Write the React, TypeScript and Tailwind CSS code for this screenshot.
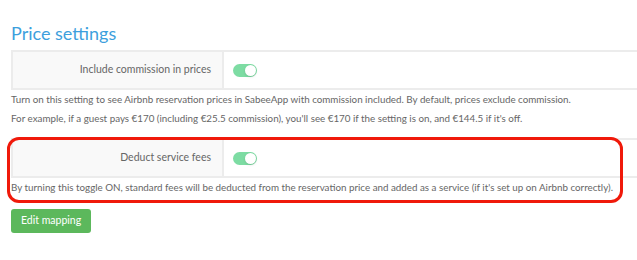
import { useState } from 'react'

function Toggle({ on, onChange }: { on: boolean; onChange: () => void }) {
  return (
    <button
      onClick={onChange}
      className={`relative w-[24px] h-[13px] rounded-full transition-colors ${on ? 'bg-[#7ddca3]' : 'bg-[#ddd]'}`}
    >
      <span
        className={`absolute top-[1px] w-[11px] h-[11px] rounded-full bg-white shadow-sm transition-all ${on ? 'left-[12px]' : 'left-[1px]'}`}
      />
    </button>
  )
}

function SettingRow({ label, on, onChange }: { label: string; on: boolean; onChange: () => void }) {
  return (
    <div className="flex h-[40px] border-2 border-[#ececec] mr-[-4px]">
      <div className="w-[211px] shrink-0 bg-[#f9f9f9] border-r-2 border-[#ececec] flex items-center justify-end pr-[11px] text-[10.5px] text-[#666]">
        {label}
      </div>
      <div className="flex-1 flex items-center pl-[9px]">
        <Toggle on={on} onChange={onChange} />
      </div>
    </div>
  )
}

export default function App() {
  const [commission, setCommission] = useState(true)
  const [fees, setFees] = useState(true)

  return (
    <div className="w-[637px] h-[260px] overflow-hidden bg-white pl-[11px] font-['Lato',sans-serif]">
      <h2 className="text-[18px] text-[#3d9fdd] pt-[21px] leading-[24px] mb-[5px]">Price settings</h2>

      <SettingRow label="Include commission in prices" on={commission} onChange={() => setCommission(!commission)} />
      <p className="text-[9.8px] text-[#666] leading-[18px]">
        Turn on this setting to see Airbnb reservation prices in SabeeApp with commission included. By default, prices exclude commission.
      </p>
      <p className="text-[9.8px] text-[#666] mt-[1px] leading-[18px]">
        For example, if a guest pays €170 (including €25.5 commission), you'll see €170 if the setting is on, and €144.5 if it's off.
      </p>

      {/* Highlighted setting */}
      <div className="relative mt-[11px]">
        <SettingRow label="Deduct service fees" on={fees} onChange={() => setFees(!fees)} />
        <p className="text-[9.8px] text-[#666] leading-[18px] whitespace-nowrap">
          By turning this toggle ON, standard fees will be deducted from the reservation price and added as a service (if it's set up on Airbnb correctly).
        </p>
        <div className="absolute left-[-4px] top-[-1px] w-[616px] h-[66px] border-[3px] border-[#f0190a] rounded-[12px] pointer-events-none" />
      </div>

      <button className="mt-[13px] h-[24px] px-[10px] rounded-[3px] bg-[#5cb85c] text-white text-[10.5px]">
        Edit mapping
      </button>
    </div>
  )
}
